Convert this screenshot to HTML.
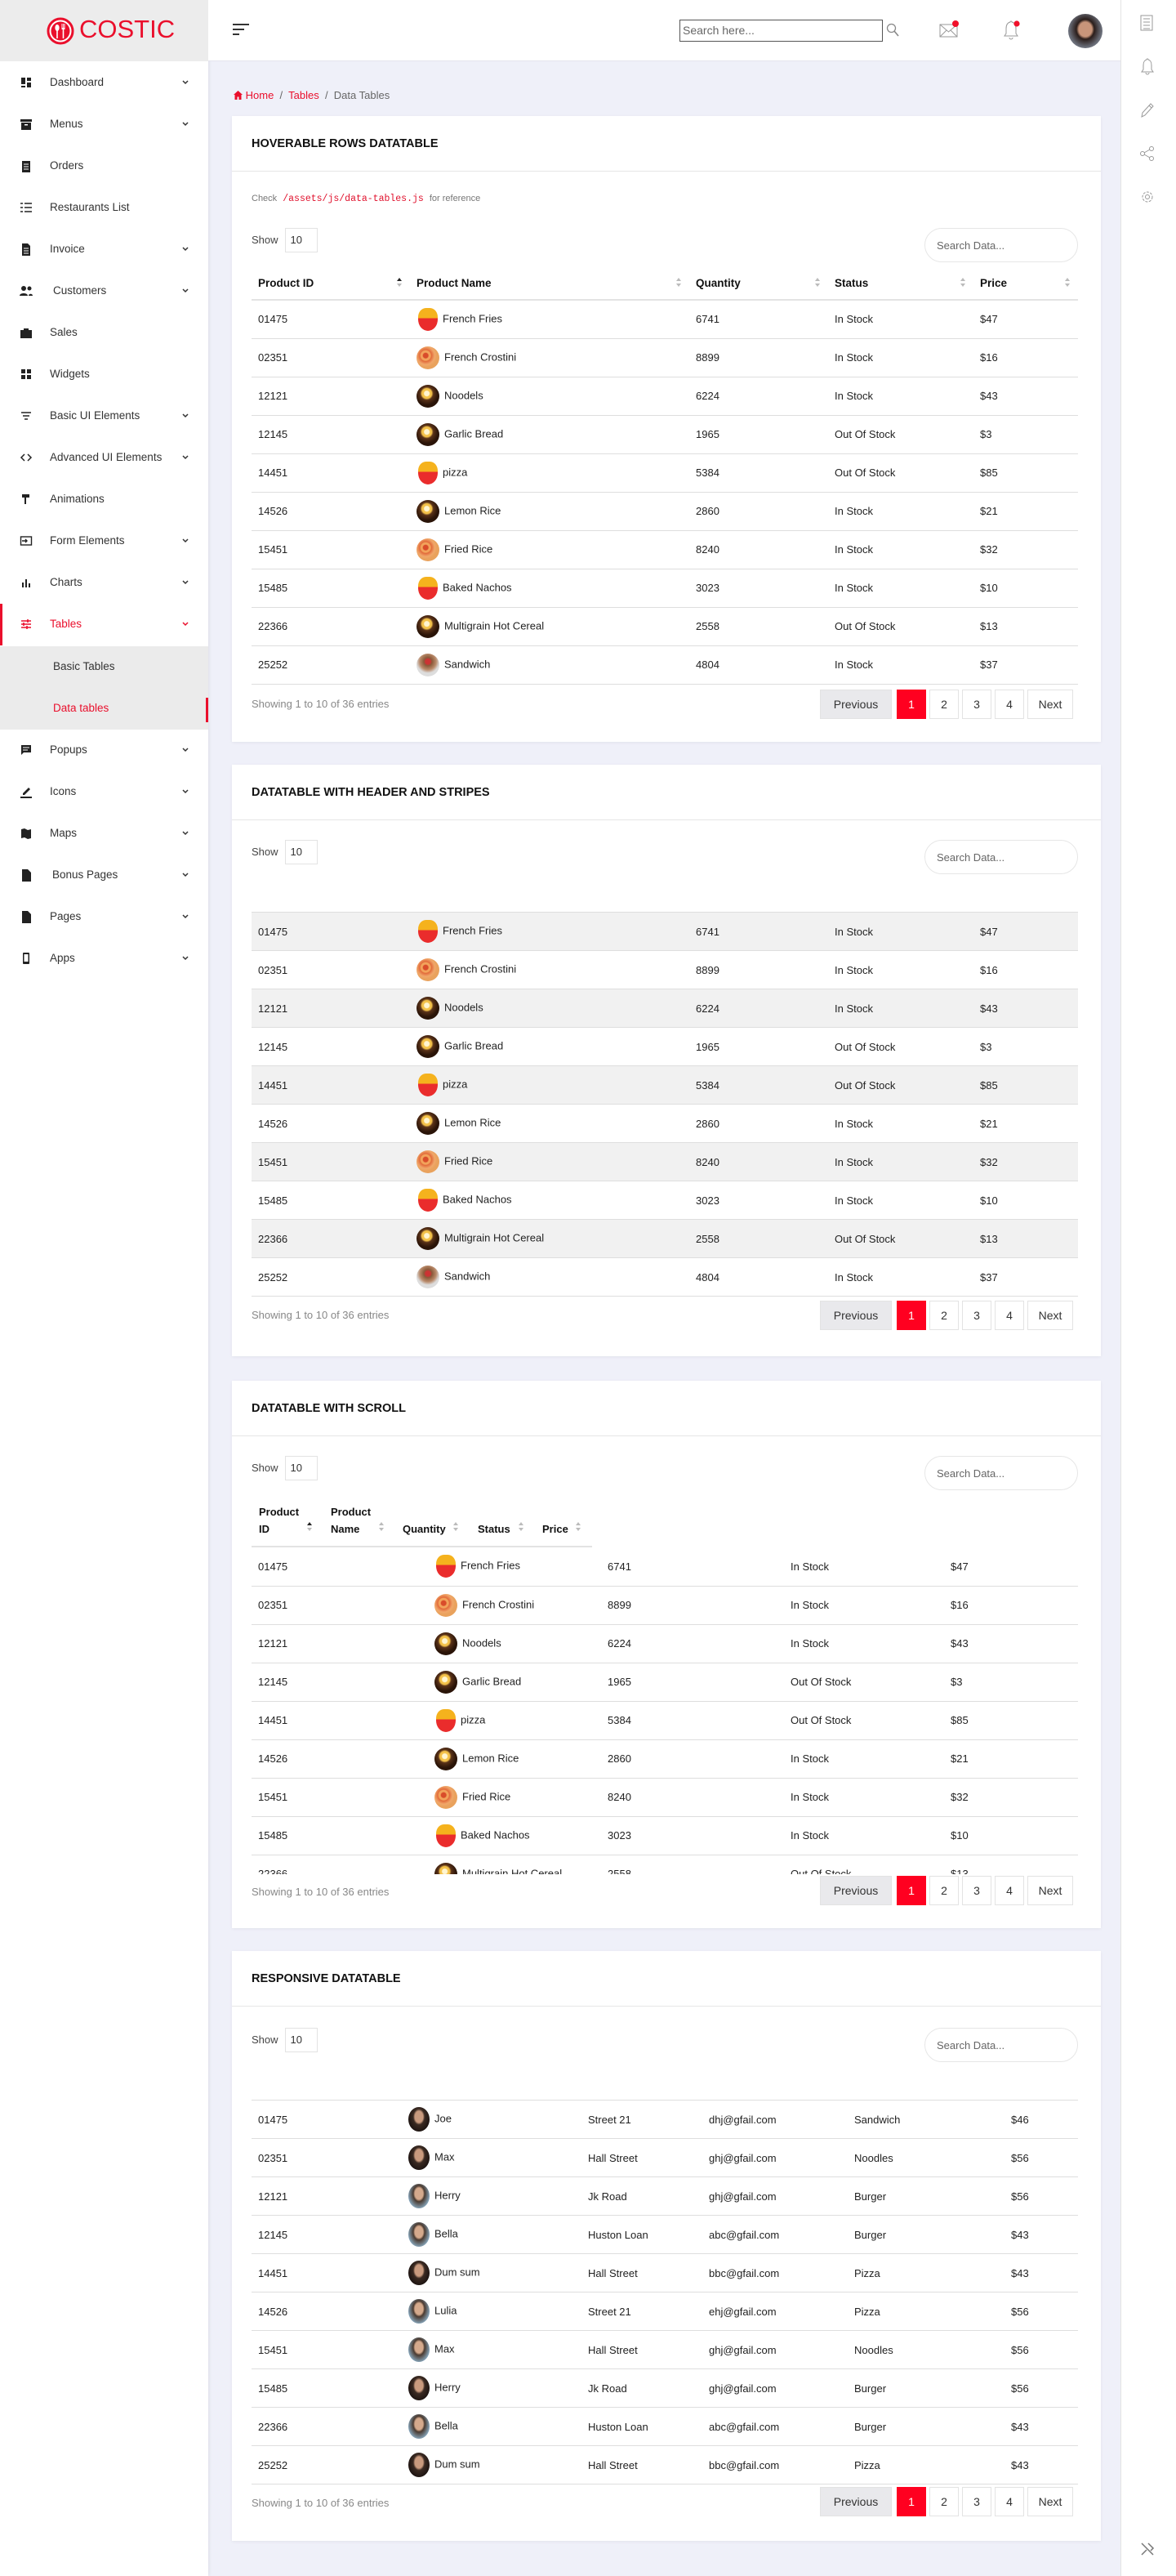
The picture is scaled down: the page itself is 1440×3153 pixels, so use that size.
<!DOCTYPE html>
<html><head><meta charset="utf-8">
<style>
*{box-sizing:border-box;margin:0;padding:0}
body{width:1440px;height:3153px;background:#eff0f9;font-family:"Liberation Sans",sans-serif;color:#222;position:relative;overflow:hidden}
.sb{position:absolute;left:0;top:0;width:255px;height:3153px;background:#fff;box-shadow:1px 0 4px rgba(0,0,0,.08)}
.logo{height:75px;background:#ececec;position:relative}
.logo .t{position:absolute;left:97px;top:18px;color:#ea0f2c;font-size:31px;letter-spacing:0}
.logo svg{position:absolute;left:57px;top:21px}
.mi{position:absolute;left:0;width:255px;height:51px;font-size:13.5px;color:#333}
.mi .ic{position:absolute;left:24px;top:17px;width:16px;height:16px}
.mi .tx{position:absolute;left:61px;top:17px}
.mi .ch{position:absolute;left:223px;top:21px;width:8px;height:8px}
.sub{position:absolute;left:0;top:791px;width:255px;height:102px;background:#ebebeb}
.rb{position:absolute;left:1372px;top:0;width:68px;height:3153px;background:#fff;border-left:1px solid #e3e3e3}
.hd{position:absolute;left:255px;top:0;width:1117px;height:75px;background:#fff;border-bottom:1px solid #e4e4ee}
.bc{position:absolute;left:286px;top:109px;font-size:13px;color:#666}
.bc a{color:#ea0f2c;text-decoration:none}
.card{position:absolute;left:284px;width:1064px;background:#fff;box-shadow:0 1px 4px rgba(0,0,0,.06)}
.card h2{height:68px;border-bottom:1px solid #e6e6e6;font-size:14.5px;font-weight:bold;padding:26px 0 0 24px;color:#111}
.show{position:absolute;left:24px;font-size:13px;color:#444}
.show span{display:inline-block;border:1px solid #e3e3e3;width:40px;height:30px;line-height:28px;padding-left:6px;margin-left:8px;color:#333}
.sd{position:absolute;left:848px;width:188px;height:42px;border:1px solid #e6e6e6;border-radius:21px;font-size:13px;color:#666;padding:13px 0 0 14px}
table{position:absolute;left:24px;width:1012px;border-collapse:collapse;font-size:13px;table-layout:fixed}
td{height:47px;border-bottom:1px solid #dedede;padding:0 8px;vertical-align:middle;color:#222;white-space:nowrap;overflow:hidden}
th{height:40px;text-align:left;padding:0 8px;font-weight:bold;font-size:13.5px;border-bottom:2px solid #e3e3e3;position:relative;color:#111}
th i{position:absolute;right:10px;top:13px;width:6px;height:12px}
th i:before{content:"";position:absolute;left:0;top:0;border:3px solid transparent;border-bottom:4px solid #bbb;border-top:0}
th i:after{content:"";position:absolute;left:0;top:7px;border:3px solid transparent;border-top:4px solid #bbb;border-bottom:0}
th i.a:before{border-bottom-color:#222}
tr.tp td{border-top:1px solid #dedede}
.st tr:nth-child(odd) td{background:#f1f1f1}
.f{display:inline-block;width:28px;height:28px;border-radius:50%;vertical-align:middle;margin-right:6px}
.fr{background:linear-gradient(#f5b21d 0 45%,#ea2c2c 45%);border-radius:40% 40% 50% 50%;width:24px;margin-left:2px}
.pz{background:radial-gradient(circle at 40% 40%,#d94c2a 0 3px,#f2a35b 4px 6px,#e26a3a 7px,#f0a76a 11px,#e9a25d 14px)}
.dk{background:radial-gradient(circle at 45% 38%,#fff5d0 0 3px,#f4c24a 4px 6px,#5a3218 8px,#2a1408 14px)}
.sw{background:radial-gradient(circle at 50% 35%,#c33 0 3px,#8a5a3a 5px,#b98a6a 10px,#ddd 14px)}
.av{display:inline-block;width:26px;height:30px;border-radius:50%;vertical-align:middle;margin-right:6px;background:radial-gradient(ellipse at 50% 40%,#c99a7e 0 5px,#3b2a22 7px,#1a1210 14px)}
.av2{background:radial-gradient(ellipse at 50% 40%,#d4a98c 0 5px,#4a3a30 7px,#8db0c8 14px)}
.foot{position:absolute;left:24px;font-size:13px;color:#888}
.pg{position:absolute;right:34px;height:36px;display:flex;gap:4px;font-size:14px}
.pg b{font-weight:normal;display:block;width:36px;text-align:center;height:36px;line-height:34px;border:1px solid #e3e3e3;color:#333;background:#fff}
.pg b.p{background:#e9e9ec;width:88px;margin-right:2px}
.pg b.c{background:#ff0020;color:#fff;border-color:#ff0020}
.pg b.n{width:56px}
.cs{font-size:11px;color:#777;position:absolute;left:24px}
.cs code{font-family:"Liberation Mono",monospace;color:#e0102c;font-size:11.5px;margin:0 4px}
.sh{position:absolute;font-size:13px;font-weight:bold;color:#111}
.sh div{position:absolute;line-height:21px;white-space:nowrap}
.sh svg{position:absolute;top:35px}
</style></head><body>

<div class="sb">
 <div class="logo">
  <svg width="34" height="34" viewBox="0 0 34 34"><circle cx="17" cy="17" r="15" fill="#fff" stroke="#ea0f2c" stroke-width="3"/><circle cx="17" cy="17" r="11.5" fill="#ea0f2c"/><ellipse cx="13" cy="13" rx="2.6" ry="4" fill="#fff"/><rect x="12.2" y="15" width="1.6" height="11" fill="#fff"/><path d="M18.5 8v7h1.2v11h1.6V15h1.2V8h-1v5h-.8V8h-.8v5h-.6V8z" fill="#fff"/></svg>
  <div class="t">COSTIC</div>
 </div>
 <div class="mi" style="top:76px"><svg class="ic" viewBox="0 0 16 16"><path d="M2 2h5v8H2zM9 2h5v4H9zM9 8h5v6H9zM2 12h5v2H2z" fill="#222"/></svg><span class="tx">Dashboard</span><svg class="ch" viewBox="0 0 8 8"><path d="M1 2l3 3 3-3" stroke="#333" stroke-width="1.5" fill="none"/></svg></div>
 <div class="mi" style="top:127px"><svg class="ic" viewBox="0 0 16 16"><path d="M1 2h14v3H1zM2 6h12v9H2z" fill="#222"/><rect x="6" y="8" width="4" height="1.5" fill="#fff"/></svg><span class="tx">Menus</span><svg class="ch" viewBox="0 0 8 8"><path d="M1 2l3 3 3-3" stroke="#333" stroke-width="1.5" fill="none"/></svg></div>
 <div class="mi" style="top:178px"><svg class="ic" viewBox="0 0 16 16"><path d="M3 2h10v14H3z" fill="#222"/><path d="M5 6h6M5 9h6M5 12h6" stroke="#fff"/></svg><span class="tx">Orders</span></div>
 <div class="mi" style="top:229px"><svg class="ic" viewBox="0 0 16 16"><path d="M6 3h9M6 8h9M6 13h9M1 3h3M1 8h3M1 13h3" stroke="#222" stroke-width="1.6"/></svg><span class="tx">Restaurants List</span></div>
 <div class="mi" style="top:280px"><svg class="ic" viewBox="0 0 16 16"><path d="M3 1h7l3 3v12H3z" fill="#222"/><path d="M5 7h6M5 10h6M5 13h6" stroke="#fff"/></svg><span class="tx">Invoice</span><svg class="ch" viewBox="0 0 8 8"><path d="M1 2l3 3 3-3" stroke="#333" stroke-width="1.5" fill="none"/></svg></div>
 <div class="mi" style="top:331px"><svg class="ic" viewBox="0 0 16 16"><circle cx="5" cy="5" r="3" fill="#222"/><circle cx="12" cy="5" r="2.5" fill="#222"/><path d="M0 14c0-4 10-4 10 0zM11 14c0-3 5-3 5 0z" fill="#222"/></svg><span class="tx" style="left:65px">Customers</span><svg class="ch" viewBox="0 0 8 8"><path d="M1 2l3 3 3-3" stroke="#333" stroke-width="1.5" fill="none"/></svg></div>
 <div class="mi" style="top:382px"><svg class="ic" viewBox="0 0 16 16"><path d="M5 3h6v2h4v10H1V5h4z" fill="#222"/></svg><span class="tx">Sales</span></div>
 <div class="mi" style="top:433px"><svg class="ic" viewBox="0 0 16 16"><path d="M2 2h5v5H2zM2 9h5v5H2zM9 9h5v5H9zM9 2h5v5H9z" fill="#222"/></svg><span class="tx">Widgets</span></div>
 <div class="mi" style="top:484px"><svg class="ic" viewBox="0 0 16 16"><path d="M2 4h12M4 8h8M6 12h4" stroke="#222" stroke-width="1.5"/></svg><span class="tx">Basic UI Elements</span><svg class="ch" viewBox="0 0 8 8"><path d="M1 2l3 3 3-3" stroke="#333" stroke-width="1.5" fill="none"/></svg></div>
 <div class="mi" style="top:535px"><svg class="ic" viewBox="0 0 16 16"><path d="M6 4L2 8l4 4M10 4l4 4-4 4" stroke="#222" stroke-width="1.5" fill="none"/></svg><span class="tx">Advanced UI Elements</span><svg class="ch" viewBox="0 0 8 8"><path d="M1 2l3 3 3-3" stroke="#333" stroke-width="1.5" fill="none"/></svg></div>
 <div class="mi" style="top:586px"><svg class="ic" viewBox="0 0 16 16"><path d="M3 2h9v4H8v8H6V6H3z" fill="#222"/></svg><span class="tx">Animations</span></div>
 <div class="mi" style="top:637px"><svg class="ic" viewBox="0 0 16 16"><rect x="1.5" y="3" width="13" height="10" stroke="#222" fill="none" stroke-width="1.4"/><path d="M3 8h6M7 6l2 2-2 2" stroke="#222" stroke-width="1.4" fill="none"/></svg><span class="tx">Form Elements</span><svg class="ch" viewBox="0 0 8 8"><path d="M1 2l3 3 3-3" stroke="#333" stroke-width="1.5" fill="none"/></svg></div>
 <div class="mi" style="top:688px"><svg class="ic" viewBox="0 0 16 16"><path d="M3 8h2v6H3zM7 4h2v10H7zM11 9h2v5h-2z" fill="#222"/></svg><span class="tx">Charts</span><svg class="ch" viewBox="0 0 8 8"><path d="M1 2l3 3 3-3" stroke="#333" stroke-width="1.5" fill="none"/></svg></div>
 <div class="mi" style="top:739px;color:#ea0f2c;border-left:3px solid #ea0f2c"><svg class="ic" viewBox="0 0 16 16" style="left:21px"><path d="M2 4h12M2 8h12M2 12h12" stroke="#ea0f2c" stroke-width="1.6"/><path d="M10 2v4M5 6v4M9 10v4" stroke="#ea0f2c" stroke-width="1.6"/></svg><span class="tx" style="left:58px">Tables</span><svg class="ch" viewBox="0 0 8 8" style="left:220px"><path d="M1 2l3 3 3-3" stroke="#ea0f2c" stroke-width="1.5" fill="none"/></svg></div>
 <div class="sub"><div style="position:absolute;left:65px;top:17px;font-size:13.5px;color:#333">Basic Tables</div><div style="position:absolute;left:65px;top:68px;font-size:13.5px;color:#ea0f2c">Data tables</div><div style="position:absolute;left:252px;top:63px;width:3px;height:30px;background:#ea0f2c"></div></div>
 <div class="mi" style="top:893px"><svg class="ic" viewBox="0 0 16 16"><path d="M2 2h12v9H5l-3 3z" fill="#222"/><path d="M4 5h8M4 8h6" stroke="#fff"/></svg><span class="tx">Popups</span><svg class="ch" viewBox="0 0 8 8"><path d="M1 2l3 3 3-3" stroke="#333" stroke-width="1.5" fill="none"/></svg></div>
 <div class="mi" style="top:944px"><svg class="ic" viewBox="0 0 16 16"><path d="M4 10l7-7 2 2-7 7H4zM1 14h14v2H1z" fill="#222"/></svg><span class="tx">Icons</span><svg class="ch" viewBox="0 0 8 8"><path d="M1 2l3 3 3-3" stroke="#333" stroke-width="1.5" fill="none"/></svg></div>
 <div class="mi" style="top:995px"><svg class="ic" viewBox="0 0 16 16"><path d="M2 3l4-1 4 2 4-1v11l-4 1-4-2-4 1z" fill="#222"/></svg><span class="tx">Maps</span><svg class="ch" viewBox="0 0 8 8"><path d="M1 2l3 3 3-3" stroke="#333" stroke-width="1.5" fill="none"/></svg></div>
 <div class="mi" style="top:1046px"><svg class="ic" viewBox="0 0 16 16"><path d="M3 1h7l4 4v11H3z" fill="#222"/></svg><span class="tx" style="left:64px">Bonus Pages</span><svg class="ch" viewBox="0 0 8 8"><path d="M1 2l3 3 3-3" stroke="#333" stroke-width="1.5" fill="none"/></svg></div>
 <div class="mi" style="top:1097px"><svg class="ic" viewBox="0 0 16 16"><path d="M3 1h7l4 4v11H3z" fill="#222"/></svg><span class="tx">Pages</span><svg class="ch" viewBox="0 0 8 8"><path d="M1 2l3 3 3-3" stroke="#333" stroke-width="1.5" fill="none"/></svg></div>
 <div class="mi" style="top:1148px"><svg class="ic" viewBox="0 0 16 16"><rect x="4" y="1" width="8" height="14" rx="1" fill="#222"/><rect x="5.5" y="3" width="5" height="9" fill="#fff"/></svg><span class="tx">Apps</span><svg class="ch" viewBox="0 0 8 8"><path d="M1 2l3 3 3-3" stroke="#333" stroke-width="1.5" fill="none"/></svg></div>
</div>

<div class="hd">
 <svg style="position:absolute;left:30px;top:28px" width="20" height="16" viewBox="0 0 20 16"><path d="M0 2h20M0 8h14M0 14h8" stroke="#333" stroke-width="2"/></svg>
 <div style="position:absolute;left:577px;top:24px;width:249px;height:27px;border:1px solid #555;font-size:14px;color:#666;padding:4px 3px">Search here...</div>
 <svg style="position:absolute;left:830px;top:28px" width="16" height="18" viewBox="0 0 16 18"><circle cx="6.5" cy="6.5" r="5" stroke="#888" fill="none" stroke-width="1.3"/><path d="M10 10l5 6" stroke="#888" stroke-width="1.6"/></svg>
 <svg style="position:absolute;left:895px;top:24px" width="28" height="24" viewBox="0 0 28 24"><rect x="1" y="6" width="21" height="15" stroke="#999" fill="none"/><path d="M1 6l10.5 9L22 6M1 21l8-8M22 21l-8-8" stroke="#999" fill="none"/><circle cx="20" cy="5" r="4" fill="#f0102a"/></svg>
 <svg style="position:absolute;left:971px;top:24px" width="26" height="26" viewBox="0 0 26 26"><path d="M11 3a1 1 0 012 0c4 1 5 4 5 8v6l2 3H4l2-3v-6c0-4 1-7 5-8zM10 22a2 2 0 004 0" stroke="#999" fill="none"/><circle cx="19" cy="5" r="3.6" fill="#f0102a"/></svg>
 <div style="position:absolute;left:1053px;top:17px;width:42px;height:42px;border-radius:50%;background:radial-gradient(ellipse at 50% 45%,#c8957a 0 8px,#2a1d1a 11px,#6b6f7a 20px)"></div>
</div>

<div class="rb">
 <svg style="position:absolute;left:21px;top:17px" width="20" height="22" viewBox="0 0 20 22"><rect x="3" y="2" width="14" height="18" stroke="#999" fill="none"/><path d="M6 6h8M6 10h8M6 14h8M6 18h8" stroke="#999"/></svg>
 <svg style="position:absolute;left:23px;top:70px" width="18" height="22" viewBox="0 0 18 22"><path d="M8 3a1 1 0 012 0c3 1 4 3 4 7v5l2 3H2l2-3v-5c0-4 1-6 4-7zM7 19a2 2 0 004 0" stroke="#999" fill="none"/></svg>
 <svg style="position:absolute;left:22px;top:124px" width="20" height="22" viewBox="0 0 20 22"><path d="M3 19l1-5 10-11 3 3-10 11zM12 5l3 3" stroke="#999" fill="none"/></svg>
 <svg style="position:absolute;left:22px;top:178px" width="20" height="20" viewBox="0 0 20 20"><circle cx="15" cy="4" r="2.5" stroke="#999" fill="none"/><circle cx="4" cy="10" r="2.5" stroke="#999" fill="none"/><circle cx="15" cy="16" r="2.5" stroke="#999" fill="none"/><path d="M6 9l7-4M6 11l7 4" stroke="#999"/></svg>
 <svg style="position:absolute;left:22px;top:231px" width="20" height="20" viewBox="0 0 20 20"><circle cx="10" cy="10" r="6" stroke="#999" fill="none" stroke-dasharray="3 1.5"/><circle cx="10" cy="10" r="2.5" stroke="#999" fill="none"/></svg>
 <svg style="position:absolute;left:22px;top:3110px" width="20" height="20" viewBox="0 0 20 20"><path d="M3 3l14 14M3 17l6-6M11 3l6 6-3 3" stroke="#777" stroke-width="1.5" fill="none"/></svg>
</div>

<div class="bc"><svg width="11" height="11" viewBox="0 0 11 11" style="vertical-align:-1px"><path d="M5.5 0L0 5h1.5v6h3V7.5h2V11h3V5H11z" fill="#ea0f2c"/></svg> <a>Home</a> &nbsp;/&nbsp; <a>Tables</a> &nbsp;/&nbsp; Data Tables</div>

<!-- CARD 1 -->
<div class="card" style="top:142px;height:766px">
 <h2>HOVERABLE ROWS DATATABLE</h2>
 <div class="cs" style="top:95px">Check <code>/assets/js/data-tables.js</code> for reference</div>
 <div class="show" style="top:137px;line-height:30px">Show<span>10</span></div>
 <div class="sd" style="top:137px">Search Data...</div>
 <table style="top:185px">
  <colgroup><col style="width:194px"><col style="width:342px"><col style="width:170px"><col style="width:178px"><col style="width:128px"></colgroup>
  <tr><th>Product ID<i class="a"></i></th><th>Product Name<i></i></th><th>Quantity<i></i></th><th>Status<i></i></th><th>Price<i></i></th></tr>
  <tr><td>01475</td><td><span class="f fr"></span>French Fries</td><td>6741</td><td>In Stock</td><td>$47</td></tr>
  <tr><td>02351</td><td><span class="f pz"></span>French Crostini</td><td>8899</td><td>In Stock</td><td>$16</td></tr>
  <tr><td>12121</td><td><span class="f dk"></span>Noodels</td><td>6224</td><td>In Stock</td><td>$43</td></tr>
  <tr><td>12145</td><td><span class="f dk"></span>Garlic Bread</td><td>1965</td><td>Out Of Stock</td><td>$3</td></tr>
  <tr><td>14451</td><td><span class="f fr"></span>pizza</td><td>5384</td><td>Out Of Stock</td><td>$85</td></tr>
  <tr><td>14526</td><td><span class="f dk"></span>Lemon Rice</td><td>2860</td><td>In Stock</td><td>$21</td></tr>
  <tr><td>15451</td><td><span class="f pz"></span>Fried Rice</td><td>8240</td><td>In Stock</td><td>$32</td></tr>
  <tr><td>15485</td><td><span class="f fr"></span>Baked Nachos</td><td>3023</td><td>In Stock</td><td>$10</td></tr>
  <tr><td>22366</td><td><span class="f dk"></span>Multigrain Hot Cereal</td><td>2558</td><td>Out Of Stock</td><td>$13</td></tr>
  <tr><td>25252</td><td><span class="f sw"></span>Sandwich</td><td>4804</td><td>In Stock</td><td>$37</td></tr>
 </table>
 <div class="foot" style="top:712px">Showing 1 to 10 of 36 entries</div>
 <div class="pg" style="top:702px"><b class="p">Previous</b><b class="c">1</b><b>2</b><b>3</b><b>4</b><b class="n">Next</b></div>
</div>

<!-- CARD 2 -->
<div class="card" style="top:936px;height:724px">
 <h2>DATATABLE WITH HEADER AND STRIPES</h2>
 <div class="show" style="top:92px;line-height:30px">Show<span>10</span></div>
 <div class="sd" style="top:92px">Search Data...</div>
 <table class="st" style="top:180px">
  <colgroup><col style="width:194px"><col style="width:342px"><col style="width:170px"><col style="width:178px"><col style="width:128px"></colgroup>
  <tr class="tp"><td>01475</td><td><span class="f fr"></span>French Fries</td><td>6741</td><td>In Stock</td><td>$47</td></tr>
  <tr><td>02351</td><td><span class="f pz"></span>French Crostini</td><td>8899</td><td>In Stock</td><td>$16</td></tr>
  <tr><td>12121</td><td><span class="f dk"></span>Noodels</td><td>6224</td><td>In Stock</td><td>$43</td></tr>
  <tr><td>12145</td><td><span class="f dk"></span>Garlic Bread</td><td>1965</td><td>Out Of Stock</td><td>$3</td></tr>
  <tr><td>14451</td><td><span class="f fr"></span>pizza</td><td>5384</td><td>Out Of Stock</td><td>$85</td></tr>
  <tr><td>14526</td><td><span class="f dk"></span>Lemon Rice</td><td>2860</td><td>In Stock</td><td>$21</td></tr>
  <tr><td>15451</td><td><span class="f pz"></span>Fried Rice</td><td>8240</td><td>In Stock</td><td>$32</td></tr>
  <tr><td>15485</td><td><span class="f fr"></span>Baked Nachos</td><td>3023</td><td>In Stock</td><td>$10</td></tr>
  <tr><td>22366</td><td><span class="f dk"></span>Multigrain Hot Cereal</td><td>2558</td><td>Out Of Stock</td><td>$13</td></tr>
  <tr><td>25252</td><td><span class="f sw"></span>Sandwich</td><td>4804</td><td>In Stock</td><td>$37</td></tr>
 </table>
 <div class="foot" style="top:666px">Showing 1 to 10 of 36 entries</div>
 <div class="pg" style="top:656px"><b class="p">Previous</b><b class="c">1</b><b>2</b><b>3</b><b>4</b><b class="n">Next</b></div>
</div>

<!-- CARD 3 -->
<div class="card" style="top:1690px;height:670px">
 <h2>DATATABLE WITH SCROLL</h2>
 <div class="show" style="top:92px;line-height:30px">Show<span>10</span></div>
 <div class="sd" style="top:92px">Search Data...</div>
 <div class="sh" style="left:24px;top:138px;width:417px;height:66px;border-bottom:2px solid #e3e3e3">
  <div style="left:9px;top:12px">Product<br>ID</div><svg style="left:68px" width="6" height="11"><path d="M0 4l3-4 3 4z" fill="#222"/><path d="M0 7l3 4 3-4z" fill="#bbb"/></svg>
  <div style="left:97px;top:12px">Product<br>Name</div><svg style="left:156px" width="6" height="11"><path d="M0 4l3-4 3 4zM0 7l3 4 3-4z" fill="#bbb"/></svg>
  <div style="left:185px;top:33px">Quantity</div><svg style="left:247px" width="6" height="11"><path d="M0 4l3-4 3 4zM0 7l3 4 3-4z" fill="#bbb"/></svg>
  <div style="left:277px;top:33px">Status</div><svg style="left:327px" width="6" height="11"><path d="M0 4l3-4 3 4zM0 7l3 4 3-4z" fill="#bbb"/></svg>
  <div style="left:356px;top:33px">Price</div><svg style="left:397px" width="6" height="11"><path d="M0 4l3-4 3 4zM0 7l3 4 3-4z" fill="#bbb"/></svg>
 </div>
 <div style="position:absolute;left:0;top:204px;width:1064px;height:400px;overflow:hidden">
 <table style="top:0">
  <colgroup><col style="width:216px"><col style="width:212px"><col style="width:224px"><col style="width:196px"><col style="width:164px"></colgroup>
  <tr><td>01475</td><td><span class="f fr"></span>French Fries</td><td>6741</td><td>In Stock</td><td>$47</td></tr>
  <tr><td>02351</td><td><span class="f pz"></span>French Crostini</td><td>8899</td><td>In Stock</td><td>$16</td></tr>
  <tr><td>12121</td><td><span class="f dk"></span>Noodels</td><td>6224</td><td>In Stock</td><td>$43</td></tr>
  <tr><td>12145</td><td><span class="f dk"></span>Garlic Bread</td><td>1965</td><td>Out Of Stock</td><td>$3</td></tr>
  <tr><td>14451</td><td><span class="f fr"></span>pizza</td><td>5384</td><td>Out Of Stock</td><td>$85</td></tr>
  <tr><td>14526</td><td><span class="f dk"></span>Lemon Rice</td><td>2860</td><td>In Stock</td><td>$21</td></tr>
  <tr><td>15451</td><td><span class="f pz"></span>Fried Rice</td><td>8240</td><td>In Stock</td><td>$32</td></tr>
  <tr><td>15485</td><td><span class="f fr"></span>Baked Nachos</td><td>3023</td><td>In Stock</td><td>$10</td></tr>
  <tr><td>22366</td><td><span class="f dk"></span>Multigrain Hot Cereal</td><td>2558</td><td>Out Of Stock</td><td>$13</td></tr>
 </table>
 </div>
 <div class="foot" style="top:618px">Showing 1 to 10 of 36 entries</div>
 <div class="pg" style="top:606px"><b class="p">Previous</b><b class="c">1</b><b>2</b><b>3</b><b>4</b><b class="n">Next</b></div>
</div>

<!-- CARD 4 -->
<div class="card" style="top:2388px;height:722px">
 <h2>RESPONSIVE DATATABLE</h2>
 <div class="show" style="top:94px;line-height:30px">Show<span>10</span></div>
 <div class="sd" style="top:94px">Search Data...</div>
 <table style="top:182px">
  <colgroup><col style="width:184px"><col style="width:220px"><col style="width:148px"><col style="width:178px"><col style="width:192px"><col style="width:90px"></colgroup>
  <tr class="tp"><td>01475</td><td><span class="av"></span>Joe</td><td>Street 21</td><td>dhj@gfail.com</td><td>Sandwich</td><td>$46</td></tr>
  <tr><td>02351</td><td><span class="av"></span>Max</td><td>Hall Street</td><td>ghj@gfail.com</td><td>Noodles</td><td>$56</td></tr>
  <tr><td>12121</td><td><span class="av av2"></span>Herry</td><td>Jk Road</td><td>ghj@gfail.com</td><td>Burger</td><td>$56</td></tr>
  <tr><td>12145</td><td><span class="av av2"></span>Bella</td><td>Huston Loan</td><td>abc@gfail.com</td><td>Burger</td><td>$43</td></tr>
  <tr><td>14451</td><td><span class="av"></span>Dum sum</td><td>Hall Street</td><td>bbc@gfail.com</td><td>Pizza</td><td>$43</td></tr>
  <tr><td>14526</td><td><span class="av av2"></span>Lulia</td><td>Street 21</td><td>ehj@gfail.com</td><td>Pizza</td><td>$56</td></tr>
  <tr><td>15451</td><td><span class="av av2"></span>Max</td><td>Hall Street</td><td>ghj@gfail.com</td><td>Noodles</td><td>$56</td></tr>
  <tr><td>15485</td><td><span class="av"></span>Herry</td><td>Jk Road</td><td>ghj@gfail.com</td><td>Burger</td><td>$56</td></tr>
  <tr><td>22366</td><td><span class="av av2"></span>Bella</td><td>Huston Loan</td><td>abc@gfail.com</td><td>Burger</td><td>$43</td></tr>
  <tr><td>25252</td><td><span class="av"></span>Dum sum</td><td>Hall Street</td><td>bbc@gfail.com</td><td>Pizza</td><td>$43</td></tr>
 </table>
 <div class="foot" style="top:668px">Showing 1 to 10 of 36 entries</div>
 <div class="pg" style="top:656px"><b class="p">Previous</b><b class="c">1</b><b>2</b><b>3</b><b>4</b><b class="n">Next</b></div>
</div>

</body></html>
